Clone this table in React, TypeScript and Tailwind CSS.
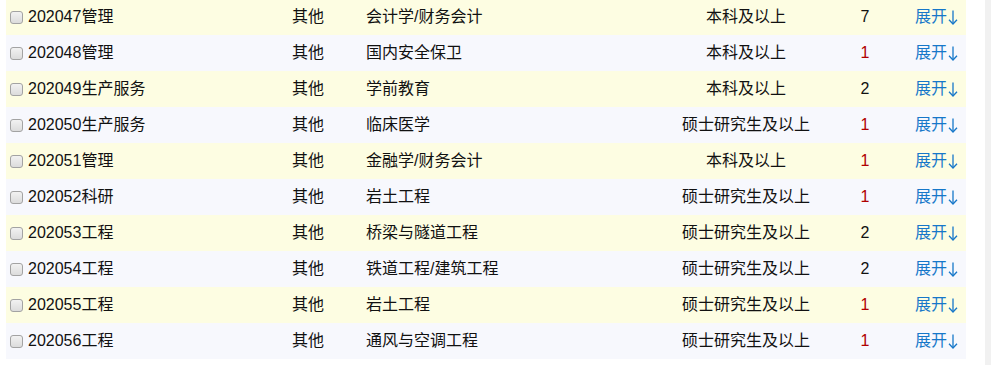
import React from 'react';

interface Job {
  code: string;
  kind: string;
  major: string;
  edu: string;
  count: number;
}

const jobs: Job[] = [
  { code: '202047管理', kind: '其他', major: '会计学/财务会计', edu: '本科及以上', count: 7 },
  { code: '202048管理', kind: '其他', major: '国内安全保卫', edu: '本科及以上', count: 1 },
  { code: '202049生产服务', kind: '其他', major: '学前教育', edu: '本科及以上', count: 2 },
  { code: '202050生产服务', kind: '其他', major: '临床医学', edu: '硕士研究生及以上', count: 1 },
  { code: '202051管理', kind: '其他', major: '金融学/财务会计', edu: '本科及以上', count: 1 },
  { code: '202052科研', kind: '其他', major: '岩土工程', edu: '硕士研究生及以上', count: 1 },
  { code: '202053工程', kind: '其他', major: '桥梁与隧道工程', edu: '硕士研究生及以上', count: 2 },
  { code: '202054工程', kind: '其他', major: '铁道工程/建筑工程', edu: '硕士研究生及以上', count: 2 },
  { code: '202055工程', kind: '其他', major: '岩土工程', edu: '硕士研究生及以上', count: 1 },
  { code: '202056工程', kind: '其他', major: '通风与空调工程', edu: '硕士研究生及以上', count: 1 },
];

// thin down arrow, same as the "↓" glyph in the original font
const DownArrow = () => (
  <svg width="10" height="15" viewBox="0 0 10 15" className="ml-[1px] mt-[1px]" fill="none" stroke="currentColor" strokeWidth="1.3">
    <path d="M5 0.5V14" />
    <path d="M1 9.8L5 14L9 9.8" />
  </svg>
);

const JobRow: React.FC<{ job: Job; index: number }> = ({ job, index }) => {
  const bg = index % 2 === 0 ? 'bg-[#fdfde2]' : 'bg-[#f7f8fd]';
  return (
    <div className={`grid grid-cols-[286px_74px_300px_160px_78px_62px] h-[36px] items-center ${bg}`}>
      <div className="flex items-center pl-[4px]">
        <span className="w-[13px] h-[13px] rounded-[3px] border border-[#a3a3a3] bg-gradient-to-b from-[#f2f2f2] to-[#dcdcdc]" />
        <span className="ml-[5px]">{job.code}</span>
      </div>
      <div>{job.kind}</div>
      <div>{job.major}</div>
      <div className="text-center">{job.edu}</div>
      <div className={`text-center ${job.count === 1 ? 'text-[#b00000]' : 'text-[#111]'}`}>{job.count}</div>
      <div className="pl-[11px]">
        <a className="inline-flex items-center text-[#1677c9] cursor-pointer">
          展开
          <DownArrow />
        </a>
      </div>
    </div>
  );
};

export default function App() {
  return (
    <div className="w-[991px] h-[365px] overflow-hidden bg-white flex font-['Liberation_Sans','Noto_Sans_CJK_SC',sans-serif] text-[16px] leading-[20px] text-[#111]">
      <div className="flex-1 pl-[6px]">
        <div className="w-[960px] -mt-px">
          {jobs.map((job, i) => (
            <JobRow key={job.code} job={job} index={i} />
          ))}
        </div>
      </div>
      <div className="w-[6px] bg-[#f1f1f1]" />
    </div>
  );
}
